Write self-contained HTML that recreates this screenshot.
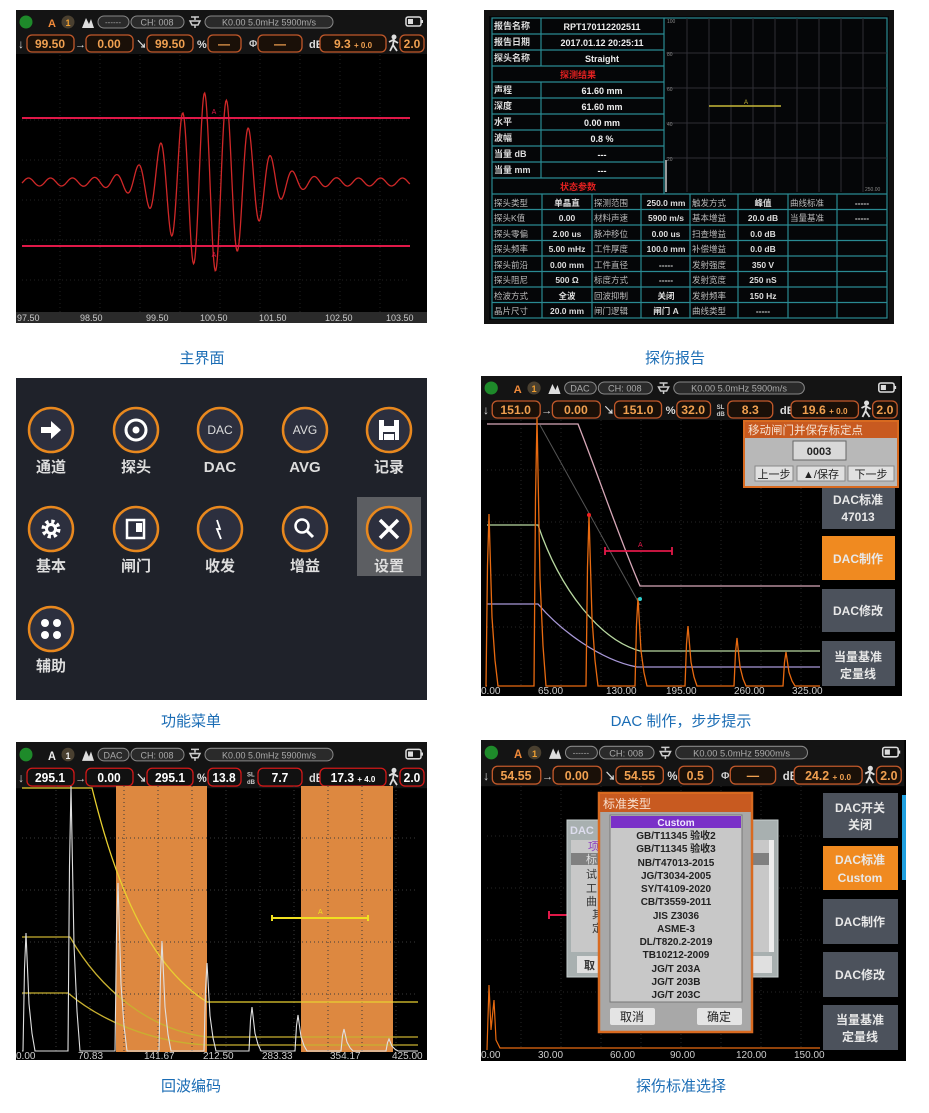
<!DOCTYPE html>
<html><head><meta charset="utf-8"><style>
html,body{margin:0;padding:0;background:#fff;}
svg{display:block;font-family:"Liberation Sans","Noto Sans CJK SC",sans-serif;}
</style></head><body>
<svg id="s" width="929" height="1113" viewBox="0 0 929 1113" xmlns="http://www.w3.org/2000/svg">
<defs>
<g id="hdr">
  <rect x="0" y="0" width="411" height="44" fill="#141414"/>
  <circle cx="10" cy="12" r="6.5" fill="#1e8a2a"/>
  <circle cx="52" cy="12" r="6.5" fill="#4a4030"/>
  <path d="M66 18 L70 8 L73 14 L75 9 L78 18 Z" fill="#ddd"/>
  <rect x="82" y="6" width="31" height="12" rx="6" fill="#2a2a2a" stroke="#888"/>
  <rect x="115" y="6" width="53" height="12" rx="6" fill="#2a2a2a" stroke="#888"/>
  <text x="141" y="15.5" font-size="9" fill="#aaa" text-anchor="middle">CH: 008</text>
  <path d="M175 7 h8 M179 7 v3 M174 11 h10 l-2 4 h-6 z M179 15 v3" stroke="#ccc" fill="none" stroke-width="1.5"/>
  <rect x="189" y="6" width="128" height="12" rx="6" fill="#2a2a2a" stroke="#888"/>
  <text x="253" y="15.5" font-size="9" fill="#aaa" text-anchor="middle">K0.00  5.0mHz  5900m/s</text>
  <rect x="390" y="7" width="15" height="9" rx="2" fill="none" stroke="#ddd" stroke-width="1.5"/>
  <rect x="392" y="9" width="5" height="5" fill="#ddd"/>
  <rect x="405" y="10" width="2" height="3" fill="#ddd"/>
  <text x="2" y="38" font-size="12" fill="#ddd" font-weight="bold">↓</text>
  <text x="59" y="38" font-size="11" fill="#ddd" font-weight="bold">→</text>
  <text x="120" y="38" font-size="11" fill="#ddd" font-weight="bold">↘</text>
  <text x="181" y="38" font-size="11" fill="#ddd" font-weight="bold">%</text>
  <text x="293" y="38" font-size="11" fill="#ddd" font-weight="bold">dB</text>
  <g stroke="#ddd" stroke-width="1.8" fill="none"><circle cx="378" cy="27" r="1.6" fill="#ddd"/><path d="M378 29 L377 35 L374 41 M377 35 L381 41 M373 32 L377 30 L382 33"/></g>
</g>
</defs>

<!-- ================= PANEL 1 ================= -->
<rect x="16" y="10" width="411" height="313" fill="#000"/>
<rect x="16" y="10" width="411" height="2" fill="#c02020"/>
<g transform="translate(16,10)">
  <use href="#hdr"/>
  <text x="32" y="17" font-size="11" font-weight="bold" fill="#f08a3a">A</text>
  <text x="52" y="16" font-size="9" font-weight="bold" fill="#f0a030" text-anchor="middle">1</text>
  <text x="97" y="15" font-size="8" fill="#aaa" text-anchor="middle">------</text>
  <g fill="#1a1008" stroke="#c0582a" stroke-width="1.3">
    <rect x="11" y="25" width="47" height="17" rx="5"/><rect x="70" y="25" width="47" height="17" rx="5"/>
    <rect x="131" y="25" width="46" height="17" rx="5"/><rect x="192" y="25" width="33" height="17" rx="5"/>
    <rect x="242" y="25" width="44" height="17" rx="5"/><rect x="304" y="25" width="66" height="17" rx="5"/>
    <rect x="384" y="25" width="24" height="17" rx="5"/>
  </g>
  <text x="233" y="37" font-size="10" fill="#ccc" font-weight="bold">Φ</text>
  <g font-size="12" font-weight="bold" fill="#f0a050" text-anchor="middle">
    <text x="34" y="38">99.50</text><text x="93" y="38">0.00</text><text x="154" y="38">99.50</text>
    <text x="208" y="38">—</text><text x="264" y="38">—</text><text x="337" y="38">9.3 <tspan font-size="8">+ 0.0</tspan></text><text x="396" y="38">2.0</text>
  </g>
</g>
<g stroke="#222" stroke-dasharray="1 3" stroke-width="1">
  <path d="M22 120 H410 M22 160 H410 M22 200 H410 M22 240 H410 M22 280 H410"/>
  <path d="M60 55 V312 M100 55 V312 M140 55 V312 M180 55 V312 M220 55 V312 M260 55 V312 M300 55 V312 M340 55 V312 M380 55 V312"/>
</g>
<path id="w1" d="" fill="none" stroke="#d02828" stroke-width="1.3"/>
<path d="M22 118 H410 M22 246 H410" stroke="#e01848" stroke-width="2"/>
<text x="214" y="114" font-size="7" fill="#e01848" text-anchor="middle">A</text>
<text x="214" y="257" font-size="7" fill="#e01848" text-anchor="middle">A</text>
<rect x="16" y="312" width="411" height="11" fill="#2a2a2a"/>
<g font-size="9" fill="#ccc">
  <text x="17" y="321">97.50</text><text x="80" y="321">98.50</text><text x="146" y="321">99.50</text>
  <text x="200" y="321">100.50</text><text x="259" y="321">101.50</text><text x="325" y="321">102.50</text><text x="386" y="321">103.50</text>
</g>

<!-- ================= PANEL 2 ================= -->
<rect x="484" y="10" width="410" height="314" fill="#111"/>
<rect x="489" y="16" width="400" height="304" fill="#050608"/>
<g stroke="#2a8a92" stroke-width="1.2" fill="none">
  <rect x="492" y="18" width="395" height="300"/>
  <path d="M664 18 V194 M541 18 V66 M541 82 V178"/>
  <path d="M492 34 H664 M492 50 H664 M492 66 H664 M492 82 H664 M492 98 H664 M492 114 H664 M492 130 H664 M492 146 H664 M492 162 H664 M492 178 H664 M492 194 H887"/>
  <path d="M492 209.5 H887 M492 225 H887 M492 240.5 H887 M492 256 H887 M492 271.5 H887 M492 287 H887 M492 302.5 H887"/>
  <path d="M542 194 V318 M592 194 V318 M641 194 V318 M690 194 V318 M738 194 V318 M788 194 V318 M837 194 V318"/>
</g>
<g stroke="#2e2e35" stroke-width="1">
  <path d="M687 18 V192 M709 18 V192 M731 18 V192 M753 18 V192 M775 18 V192 M797 18 V192 M819 18 V192 M841 18 V192 M863 18 V192"/>
  <path d="M666 53 H887 M666 88 H887 M666 123 H887 M666 158 H887"/>
</g>
<g font-size="5" fill="#888"><text x="667" y="23">100</text><text x="667" y="56">80</text><text x="667" y="91">60</text><text x="667" y="126">40</text><text x="667" y="161">20</text><text x="865" y="191">250.00</text></g>
<path d="M666 160 V192" stroke="#ccc" stroke-width="1.5"/>
<path d="M709 106 H781" stroke="#c8b838" stroke-width="1.5"/>
<text x="744" y="104" font-size="6" fill="#c8b838">A</text>
<g font-size="9" font-weight="bold" fill="#ddd">
  <text x="494" y="29">报告名称</text><text x="494" y="45">报告日期</text><text x="494" y="61">探头名称</text>
  <text x="494" y="93">声程</text><text x="494" y="109">深度</text><text x="494" y="125">水平</text><text x="494" y="141">波幅</text>
  <text x="494" y="157">当量 dB</text><text x="494" y="173">当量 mm</text>
</g>
<g font-size="9" font-weight="bold" fill="#eee" text-anchor="middle">
  <text x="602" y="30">RPT170112202511</text><text x="602" y="46">2017.01.12  20:25:11</text><text x="602" y="62">Straight</text>
  <text x="602" y="94">61.60 mm</text><text x="602" y="110">61.60 mm</text><text x="602" y="126">0.00 mm</text><text x="602" y="142">0.8 %</text>
  <text x="602" y="158">---</text><text x="602" y="174">---</text>
</g>
<text x="578" y="78" font-size="9" font-weight="bold" fill="#e02020" text-anchor="middle">探测结果</text>
<text x="578" y="190" font-size="9" font-weight="bold" fill="#e02020" text-anchor="middle">状态参数</text>
<g font-size="8.5" fill="#bbb">
  <text x="494" y="206">探头类型</text><text x="494" y="221">探头K值</text><text x="494" y="237">探头零偏</text><text x="494" y="252">探头频率</text><text x="494" y="268">探头前沿</text><text x="494" y="283">探头阻尼</text><text x="494" y="299">检波方式</text><text x="494" y="314">晶片尺寸</text>
  <text x="594" y="206">探测范围</text><text x="594" y="221">材料声速</text><text x="594" y="237">脉冲移位</text><text x="594" y="252">工件厚度</text><text x="594" y="268">工件直径</text><text x="594" y="283">标度方式</text><text x="594" y="299">回波抑制</text><text x="594" y="314">闸门逻辑</text>
  <text x="692" y="206">触发方式</text><text x="692" y="221">基本增益</text><text x="692" y="237">扫查增益</text><text x="692" y="252">补偿增益</text><text x="692" y="268">发射强度</text><text x="692" y="283">发射宽度</text><text x="692" y="299">发射频率</text><text x="692" y="314">曲线类型</text>
  <text x="790" y="206">曲线标准</text><text x="790" y="221">当量基准</text>
</g>
<g font-size="8.5" font-weight="bold" fill="#ddd" text-anchor="middle">
  <text x="567" y="206">单晶直</text><text x="567" y="221">0.00</text><text x="567" y="237">2.00 us</text><text x="567" y="252">5.00 mHz</text><text x="567" y="268">0.00 mm</text><text x="567" y="283">500 Ω</text><text x="567" y="299">全波</text><text x="567" y="314">20.0 mm</text>
  <text x="666" y="206">250.0 mm</text><text x="666" y="221">5900 m/s</text><text x="666" y="237">0.00 us</text><text x="666" y="252">100.0 mm</text><text x="666" y="268">-----</text><text x="666" y="283">-----</text><text x="666" y="299">关闭</text><text x="666" y="314">闸门 A</text>
  <text x="763" y="206">峰值</text><text x="763" y="221">20.0 dB</text><text x="763" y="237">0.0 dB</text><text x="763" y="252">0.0 dB</text><text x="763" y="268">350 V</text><text x="763" y="283">250 nS</text><text x="763" y="299">150 Hz</text><text x="763" y="314">-----</text>
  <text x="862" y="206">-----</text><text x="862" y="221">-----</text>
</g>

<!-- ================= PANEL 3 ================= -->
<rect x="16" y="378" width="411" height="322" fill="#1f222a"/>
<rect x="357" y="497" width="64" height="79" fill="#5c5e62"/>
<g fill="#2c2f3e" stroke="#e8881e" stroke-width="2.5">
  <circle cx="51" cy="430" r="22"/><circle cx="136" cy="430" r="22"/><circle cx="220" cy="430" r="22"/><circle cx="305" cy="430" r="22"/><circle cx="389" cy="430" r="22"/>
  <circle cx="51" cy="529" r="22"/><circle cx="136" cy="529" r="22"/><circle cx="220" cy="529" r="22"/><circle cx="305" cy="529" r="22"/><circle cx="389" cy="529" r="22"/>
  <circle cx="51" cy="629" r="22"/>
</g>
<path d="M41 427 h10 v-6 l10 9 l-10 9 v-6 h-10 z" fill="#fff"/>
<circle cx="136" cy="430" r="10" fill="none" stroke="#fff" stroke-width="3"/><circle cx="136" cy="430" r="3.5" fill="#fff"/>
<text x="220" y="434" font-size="12" fill="#ddd" text-anchor="middle">DAC</text>
<text x="305" y="434" font-size="12" fill="#ddd" text-anchor="middle">AVG</text>
<path d="M379 420 h20 v20 h-20 z" fill="#fff"/><rect x="384" y="420" width="10" height="6" fill="#2c2f3e"/><rect x="383" y="432" width="12" height="8" fill="#2c2f3e"/><rect x="384" y="434" width="10" height="6" fill="#fff"/>
<circle cx="51" cy="529" r="7" fill="none" stroke="#fff" stroke-width="5" stroke-dasharray="3 2.5"/><circle cx="51" cy="529" r="6" fill="#fff"/><circle cx="51" cy="529" r="3" fill="#2c2f3e"/>
<rect x="127" y="520" width="17" height="18" fill="none" stroke="#fff" stroke-width="2.5"/><rect x="136" y="523" width="6" height="9" fill="#fff"/>
<path d="M217 520 l3 9 l-3 0 l4 10" fill="none" stroke="#fff" stroke-width="1.8"/>
<circle cx="302" cy="526" r="6.5" fill="none" stroke="#fff" stroke-width="2.5"/><path d="M307 531 l6 6" stroke="#fff" stroke-width="3"/>
<path d="M380 520 l18 18 M398 520 l-18 18" stroke="#fff" stroke-width="3.5"/>
<circle cx="45" cy="623" r="4" fill="#fff"/><circle cx="57" cy="623" r="4" fill="#fff"/><circle cx="45" cy="635" r="4" fill="#fff"/><circle cx="57" cy="635" r="4" fill="#fff"/>
<g font-size="15" font-weight="bold" fill="#ddd" text-anchor="middle">
  <text x="51" y="472">通道</text><text x="136" y="472">探头</text><text x="220" y="472">DAC</text><text x="305" y="472">AVG</text><text x="389" y="472">记录</text>
  <text x="51" y="571">基本</text><text x="136" y="571">闸门</text><text x="220" y="571">收发</text><text x="305" y="571">增益</text><text x="389" y="571">设置</text>
  <text x="51" y="671">辅助</text>
</g>

<!-- ================= PANEL 4 ================= -->
<rect x="481" y="376" width="421" height="320" fill="#000"/>
<g transform="translate(481,376) scale(1.02,1)">
  <use href="#hdr"/>
  <text x="32" y="17" font-size="11" font-weight="bold" fill="#f08a3a">A</text>
  <text x="52" y="16" font-size="9" font-weight="bold" fill="#f0a030" text-anchor="middle">1</text>
  <text x="97" y="15.5" font-size="9" fill="#aaa" text-anchor="middle">DAC</text>
  <g fill="#1a1008" stroke="#c0582a" stroke-width="1.3">
    <rect x="11" y="25" width="47" height="17" rx="5"/><rect x="70" y="25" width="47" height="17" rx="5"/>
    <rect x="131" y="25" width="46" height="17" rx="5"/><rect x="192" y="25" width="33" height="17" rx="5"/>
    <rect x="242" y="25" width="44" height="17" rx="5"/><rect x="304" y="25" width="66" height="17" rx="5"/>
    <rect x="384" y="25" width="24" height="17" rx="5"/>
  </g>
  <text x="231" y="33" font-size="6" fill="#ccc" font-weight="bold">SL</text><text x="231" y="40" font-size="6" fill="#ccc" font-weight="bold">dB</text>
  <g font-size="12" font-weight="bold" fill="#f0a050" text-anchor="middle">
    <text x="34" y="38">151.0</text><text x="93" y="38">0.00</text><text x="154" y="38">151.0</text>
    <text x="208" y="38">32.0</text><text x="264" y="38">8.3</text><text x="337" y="38">19.6 <tspan font-size="8">+ 0.0</tspan></text><text x="396" y="38">2.0</text>
  </g>
</g>
<g stroke="#262626" stroke-dasharray="1 3">
  <path d="M487 470 H820 M487 522 H820 M487 575 H820 M487 627 H820"/>
  <path d="M521 420 V688 M561 420 V688 M601 420 V688 M641 420 V688 M681 420 V688 M721 420 V688 M761 420 V688 M801 420 V688"/>
</g>
<path d="M540 425 L640 605" stroke="#555" stroke-width="1"/>
<path d="M487 424 H578 C600 480 620 540 640 586 H820" fill="none" stroke="#d8a8b8" stroke-width="1.3"/>
<path d="M487 525 H538 C560 590 600 640 640 651 H820" fill="none" stroke="#b8d8a0" stroke-width="1.3"/>
<path d="M487 604 H538 C560 630 600 660 637 667 H820" fill="none" stroke="#a898d8" stroke-width="1.3"/>
<path id="w4" d="" fill="none" stroke="#e86a10" stroke-width="1.3"/>
<circle cx="589" cy="515" r="2" fill="#f02020"/><circle cx="640" cy="599" r="2" fill="#30d0d0"/>
<path d="M605 551 H672 M605 547 V555 M672 547 V555" stroke="#e01848" stroke-width="1.8"/>
<text x="638" y="547" font-size="7" fill="#e01848">A</text>
<g font-size="10" fill="#ccc"><text x="481" y="694">0.00</text><text x="538" y="694">65.00</text><text x="606" y="694">130.00</text><text x="666" y="694">195.00</text><text x="734" y="694">260.00</text><text x="792" y="694">325.00</text></g>
<rect x="822" y="488" width="73" height="41" fill="#4c525c"/>
<rect x="822" y="536" width="73" height="44" fill="#f08a20"/>
<rect x="822" y="589" width="73" height="43" fill="#4c525c"/>
<rect x="822" y="641" width="73" height="45" fill="#4c525c"/>
<g font-size="12" font-weight="bold" fill="#e8e8e8" text-anchor="middle">
  <text x="858" y="504">DAC标准</text><text x="858" y="521">47013</text>
  <text x="858" y="563">DAC制作</text><text x="858" y="615">DAC修改</text>
  <text x="858" y="661">当量基准</text><text x="858" y="678">定量线</text>
</g>
<rect x="744" y="421" width="154" height="66" fill="#b8b8b8" stroke="#d86a20" stroke-width="2"/>
<rect x="745" y="422" width="152" height="16" fill="#c85a20"/>
<text x="748" y="434" font-size="11.5" fill="#f5e0d0">移动闸门并保存标定点</text>
<rect x="793" y="441" width="53" height="19" fill="#d8d8d8" stroke="#666"/>
<text x="819" y="455" font-size="11" font-weight="bold" fill="#222" text-anchor="middle">0003</text>
<g fill="#e0e0e0" stroke="#888"><rect x="755" y="466" width="38" height="15"/><rect x="797" y="466" width="48" height="15"/><rect x="848" y="466" width="46" height="15"/></g>
<g font-size="11" fill="#222" text-anchor="middle"><text x="774" y="478">上一步</text><text x="821" y="478">▲/保存</text><text x="871" y="478">下一步</text></g>

<!-- ================= PANEL 5 ================= -->
<rect x="16" y="742" width="411" height="318" fill="#000"/>
<g transform="translate(16,742) scale(1,1.05)">
  <use href="#hdr"/>
  <text x="32" y="17" font-size="11" font-weight="bold" fill="#eee">A</text>
  <text x="52" y="16" font-size="9" font-weight="bold" fill="#eee" text-anchor="middle">1</text>
  <text x="97" y="15.5" font-size="9" fill="#aaa" text-anchor="middle">DAC</text>
  <g fill="#111" stroke="#d01818" stroke-width="1.3">
    <rect x="11" y="25" width="47" height="17" rx="5"/><rect x="70" y="25" width="47" height="17" rx="5"/>
    <rect x="131" y="25" width="46" height="17" rx="5"/><rect x="192" y="25" width="33" height="17" rx="5"/>
    <rect x="242" y="25" width="44" height="17" rx="5"/><rect x="304" y="25" width="66" height="17" rx="5"/>
    <rect x="384" y="25" width="24" height="17" rx="5"/>
  </g>
  <text x="231" y="33" font-size="6" fill="#ccc" font-weight="bold">SL</text><text x="231" y="40" font-size="6" fill="#ccc" font-weight="bold">dB</text>
  <g font-size="12" font-weight="bold" fill="#fff" text-anchor="middle">
    <text x="34" y="38">295.1</text><text x="93" y="38">0.00</text><text x="154" y="38">295.1</text>
    <text x="208" y="38">13.8</text><text x="264" y="38">7.7</text><text x="337" y="38">17.3 <tspan font-size="8">+ 4.0</tspan></text><text x="396" y="38">2.0</text>
  </g>
</g>
<rect x="116" y="786" width="91" height="266" fill="#dd8840"/>
<rect x="301" y="786" width="92" height="266" fill="#dd8840"/>
<g stroke="#3a3a3a" stroke-dasharray="1 3">
  <path d="M22 838 H415 M22 890 H415 M22 942 H415 M22 994 H415"/>
  <path d="M56 786 V1052 M90 786 V1052 M124 786 V1052 M158 786 V1052 M192 786 V1052 M226 786 V1052 M260 786 V1052 M294 786 V1052 M328 786 V1052 M362 786 V1052 M396 786 V1052"/>
</g>
<path d="M22 788 H92 C110 860 140 960 207 1002 H418" fill="none" stroke="#e8d030" stroke-width="1.3"/>
<path d="M22 937 H70 C100 990 150 1030 207 1037 H418" fill="none" stroke="#c8b030" stroke-width="1.3"/>
<path d="M22 993 H68 C100 1020 150 1042 207 1045 H418" fill="none" stroke="#c8b030" stroke-width="1.3"/>
<path id="w5" d="" fill="none" stroke="#e0e0e0" stroke-width="1.1"/>
<path d="M272 918 H368 M272 915 V921 M368 915 V921" stroke="#f0e020" stroke-width="2"/>
<text x="318" y="914" font-size="7" fill="#f0e020">A</text>
<g font-size="10" fill="#ccc"><text x="16" y="1059">0.00</text><text x="78" y="1059">70.83</text><text x="144" y="1059">141.67</text><text x="203" y="1059">212.50</text><text x="262" y="1059">283.33</text><text x="330" y="1059">354.17</text><text x="392" y="1059">425.00</text></g>

<!-- ================= PANEL 6 ================= -->
<rect x="481" y="740" width="425" height="321" fill="#000"/>
<g transform="translate(481,740) scale(1.03,1.05)">
  <use href="#hdr"/>
  <text x="32" y="17" font-size="11" font-weight="bold" fill="#f08a3a">A</text>
  <text x="52" y="16" font-size="9" font-weight="bold" fill="#f0a030" text-anchor="middle">1</text>
  <text x="97" y="15" font-size="8" fill="#aaa" text-anchor="middle">------</text>
  <g fill="#1a1008" stroke="#c0582a" stroke-width="1.3">
    <rect x="11" y="25" width="47" height="17" rx="5"/><rect x="70" y="25" width="47" height="17" rx="5"/>
    <rect x="131" y="25" width="46" height="17" rx="5"/><rect x="192" y="25" width="33" height="17" rx="5"/>
    <rect x="242" y="25" width="44" height="17" rx="5"/><rect x="304" y="25" width="66" height="17" rx="5"/>
    <rect x="384" y="25" width="24" height="17" rx="5"/>
  </g>
  <text x="233" y="37" font-size="10" fill="#ccc" font-weight="bold">Φ</text>
  <g font-size="12" font-weight="bold" fill="#f0a050" text-anchor="middle">
    <text x="34" y="38">54.55</text><text x="93" y="38">0.00</text><text x="154" y="38">54.55</text>
    <text x="208" y="38">0.5</text><text x="264" y="38">—</text><text x="337" y="38">24.2 <tspan font-size="8">+ 0.0</tspan></text><text x="396" y="38">2.0</text>
  </g>
</g>
<g stroke="#262626" stroke-dasharray="1 3">
  <path d="M487 836 H820 M487 888 H820 M487 940 H820 M487 992 H820"/>
  <path d="M521 786 V1050 M561 786 V1050 M601 786 V1050 M641 786 V1050 M681 786 V1050 M721 786 V1050 M761 786 V1050 M801 786 V1050"/>
</g>
<path d="M487 1050 L489 985 L491 1030 L494 1000 L496 1040 L500 1048 H820" fill="none" stroke="#e86a10" stroke-width="1.2"/>
<path d="M549 915 H570 M549 911 V919" stroke="#e01848" stroke-width="2"/>
<rect x="567" y="820" width="211" height="157" fill="#a8b0b0" stroke="#c8d0d0"/>
<text x="570" y="834" font-size="11" font-weight="bold" fill="#dde">DAC</text>
<rect x="571" y="840" width="203" height="112" fill="#c8c8c8"/>
<rect x="571" y="853" width="203" height="12" fill="#808080"/>
<g font-size="11" fill="#333"><text x="588" y="850" fill="#9040c0">项</text><text x="586" y="863" fill="#ddd">标</text><text x="586" y="878">试</text><text x="586" y="892">工</text><text x="586" y="905">曲</text><text x="592" y="918">其</text><text x="592" y="932">定</text></g>
<rect x="577" y="956" width="30" height="17" fill="#e0e0e0"/><text x="584" y="969" font-size="11" font-weight="bold" fill="#333">取</text>
<rect x="752" y="956" width="20" height="17" fill="#e0e0e0"/>
<rect x="769" y="840" width="5" height="112" fill="#eee"/>
<rect x="599" y="793" width="153" height="239" fill="#a8a8a8" stroke="#d86a20" stroke-width="2.5"/>
<rect x="600" y="794" width="151" height="18" fill="#c85a20"/>
<text x="603" y="808" font-size="12" fill="#f8e0d0">标准类型</text>
<rect x="610" y="815" width="132" height="187" fill="#c8c8c8" stroke="#777"/>
<rect x="611" y="816" width="130" height="12" fill="#7a30c8"/>
<g font-size="10" font-weight="bold" fill="#222" text-anchor="middle">
  <text x="676" y="826" fill="#f0e8ff">Custom</text>
  <text x="676" y="839">GB/T11345 验收2</text><text x="676" y="852">GB/T11345 验收3</text><text x="676" y="866">NB/T47013-2015</text>
  <text x="676" y="879">JG/T3034-2005</text><text x="676" y="892">SY/T4109-2020</text><text x="676" y="905">CB/T3559-2011</text>
  <text x="676" y="919">JIS Z3036</text><text x="676" y="932">ASME-3</text><text x="676" y="945">DL/T820.2-2019</text>
  <text x="676" y="958">TB10212-2009</text><text x="676" y="972">JG/T 203A</text><text x="676" y="985">JG/T 203B</text><text x="676" y="998">JG/T 203C</text>
</g>
<rect x="610" y="1008" width="45" height="17" rx="2" fill="#e4e4e4"/><rect x="697" y="1008" width="45" height="17" rx="2" fill="#e4e4e4"/>
<g font-size="12" fill="#222" text-anchor="middle"><text x="632" y="1021">取消</text><text x="719" y="1021">确定</text></g>
<g font-size="10" fill="#ccc"><text x="481" y="1058">0.00</text><text x="538" y="1058">30.00</text><text x="610" y="1058">60.00</text><text x="670" y="1058">90.00</text><text x="736" y="1058">120.00</text><text x="794" y="1058">150.00</text></g>
<rect x="823" y="793" width="75" height="45" fill="#4c525c"/>
<rect x="823" y="846" width="75" height="44" fill="#f08a20"/>
<rect x="823" y="899" width="75" height="45" fill="#4c525c"/>
<rect x="823" y="952" width="75" height="45" fill="#4c525c"/>
<rect x="823" y="1005" width="75" height="45" fill="#4c525c"/>
<rect x="902" y="795" width="4" height="85" fill="#20a0e0"/>
<g font-size="12" font-weight="bold" fill="#e8e8e8" text-anchor="middle">
  <text x="860" y="812">DAC开关</text><text x="860" y="829">关闭</text>
  <text x="860" y="864">DAC标准</text><text x="860" y="882">Custom</text>
  <text x="860" y="926">DAC制作</text><text x="860" y="979">DAC修改</text>
  <text x="860" y="1024">当量基准</text><text x="860" y="1041">定量线</text>
</g>

<!-- ================= CAPTIONS ================= -->
<g font-size="15" fill="#1b6db5" text-anchor="middle">
  <text x="202" y="363">主界面</text><text x="675" y="363">探伤报告</text>
  <text x="191" y="726">功能菜单</text><text x="681" y="726">DAC 制作，步步提示</text>
  <text x="191" y="1091">回波编码</text><text x="681" y="1091">探伤标准选择</text>
</g>
</svg>
<script>
(function(){
  var d="";
  for(var x=22;x<=410;x+=0.7){
    var g=Math.exp(-Math.pow((x-210)/52,2));
    var y=182+ (4+86*g)*Math.sin((x-210)/22*2*Math.PI);
    d+=(d?"L":"M")+x.toFixed(1)+" "+y.toFixed(1);
  }
  document.getElementById("w1").setAttribute("d",d);
  function echoes(base,peaks,x0,x1){
    var s="M"+x0+" "+base;
    peaks.forEach(function(p){
      var px=p[0],h=p[1];
      s+=" L"+(px-3)+" "+base+" L"+(px-1.5)+" "+(base-h*0.7)+" L"+px+" "+(base-h)+" L"+(px+1.5)+" "+(base-h*0.7)+" L"+(px+3)+" "+(base-h*0.4)+" L"+(px+6)+" "+(base-h*0.15)+" L"+(px+9)+" "+base;
    });
    s+=" L"+x1+" "+base;
    return s;
  }
  document.getElementById("w4").setAttribute("d",echoes(686,[[489,172],[537,268],[589,170],[638,88],[688,60],[737,48],[786,34]],487,820));
  document.getElementById("w5").setAttribute("d",echoes(1051,[[26,118],[71,265],[118,168],[162,110],[207,88],[252,44],[298,36],[344,22],[389,12]],22,418));
})();
</script>
</body></html>
